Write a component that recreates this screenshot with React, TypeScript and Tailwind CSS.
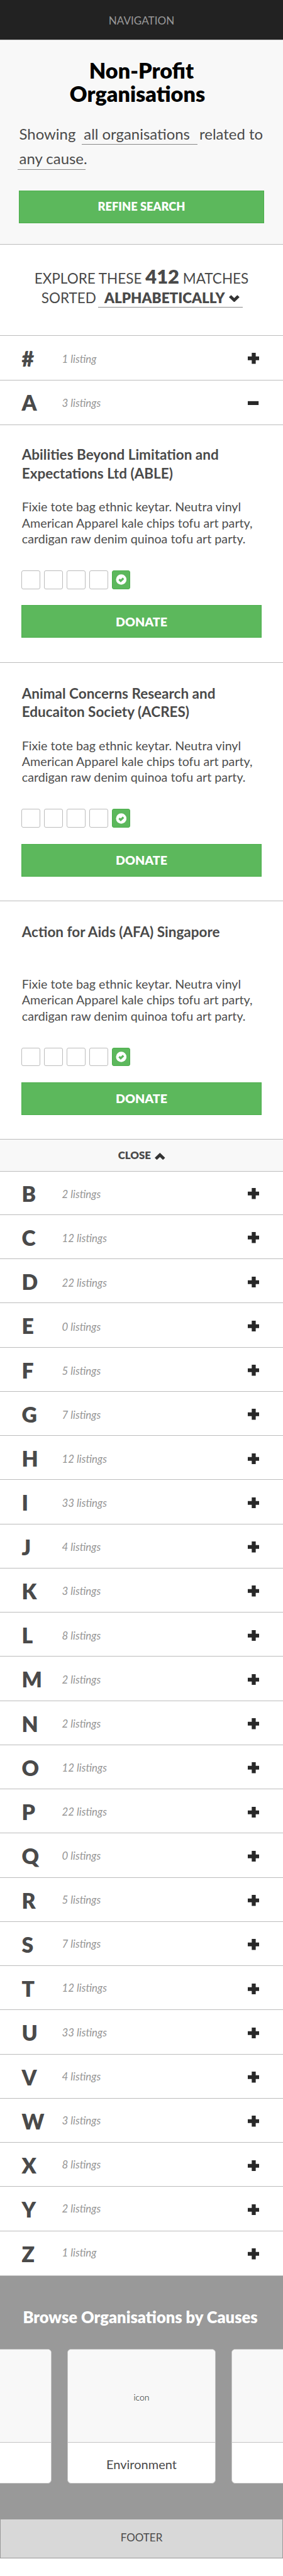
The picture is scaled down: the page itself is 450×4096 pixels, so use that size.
import type { ReactNode } from "react";

type Organisation = { name: ReactNode; pad: string };
type Group = { letter: string; count: number; size: string };

const ORGANISATIONS: Organisation[] = [
  { name: <>Abilities Beyond Limitation and<br />Expectations Ltd (ABLE)</>, pad: "h-[377.98px] pt-[32.8px]" },
  { name: <>Animal Concerns Research and<br />Educaiton Society (ACRES)</>, pad: "h-[379.39px] pt-[34.2px]" },
  { name: <>Action for Aids (AFA) Singapore</>, pad: "h-[379.39px] pt-[34.2px]" },
];

const COUNTS = [2, 12, 22, 0, 5, 7, 12, 33, 4, 3, 8, 2, 2, 12, 22, 0, 5, 7, 12, 33, 4, 3, 8, 2, 1];

const GROUPS: Group[] = COUNTS.map((count, i) => ({
  letter: String.fromCharCode(66 + i),
  count,
  size:
    i === 0
      ? "h-[68.85px] pt-[17.6px]"
      : i === COUNTS.length - 1
        ? "h-[71.66px] pt-[19px]"
        : "h-[70.257px] pt-[19px]",
}));

function Chevron({ className }: { className: string }) {
  return (
    <svg viewBox="0 0 24 16.5" className={className} fill="#333">
      <path d="M0 5 L5 0.2 L12 7 L19 0.2 L24 5 L12 16.5 Z" />
    </svg>
  );
}

function Plus() {
  return (
    <svg viewBox="0 0 26.5 25" className="mt-[8.6px] h-[17.6px] w-[18.6px]" fill="#282828">
      <path d="M9 0h9v8.2h8.5v8.6H18V25H9v-8.2H0V8.2h9z" />
    </svg>
  );
}

function Minus() {
  return (
    <svg viewBox="0 0 26.5 25" className="mt-[8.6px] h-[17.6px] w-[18.6px]" fill="#282828">
      <path d="M0 8.3h24.5v8.8H0z" />
    </svg>
  );
}

function GroupRow({ letter, count, size, shift, open }: Group & { shift: number; open?: boolean }) {
  return (
    <div className={`flex items-start border-b border-[#bcbcbc] pl-[34.5px] pr-[37.6px] ${size}`}>
      <div className="w-[64px] text-[33.75px] font-extrabold leading-[34px] text-[#4a4a4a]">{letter}</div>
      <div
        className="flex-1 text-[16.87px] italic leading-[34px] text-[#959595]"
        style={{ marginTop: shift }}
      >
        {count} {count === 1 ? "listing" : "listings"}
      </div>
      {open ? <Minus /> : <Plus />}
    </div>
  );
}

function OrganisationCard({ name, pad }: Organisation) {
  return (
    <article className={`border-b border-[#bcbcbc] px-[33.75px] ${pad}`}>
      <h3 className="h-[59px] whitespace-nowrap pl-[1px] text-[22.5px] font-bold leading-[29.5px] text-[#4a4a4a]">{name}</h3>
      <p className="mt-[25.8px] whitespace-nowrap pl-[1px] text-[19.7px] leading-[25.3px] text-[#4e4e4e]">
        Fixie tote bag ethnic keytar. Neutra vinyl<br />
        American Apparel kale chips tofu art party,<br />
        cardigan raw denim quinoa tofu art party.
      </p>
      <div className="mt-[38px] flex gap-[6.36px] pl-[0.7px]">
        {[0, 1, 2, 3].map((i) => (
          <div key={i} className="size-[29.5px] rounded-[3px] border border-[#bcbcbc]" />
        ))}
        <div className="flex size-[29.5px] items-center justify-center rounded-[3px] border border-[#4cae4c] bg-[#5cb85c]">
          <svg viewBox="0 0 24 24" className="size-[17px]">
            <circle cx="12.4" cy="12" r="11.7" fill="#fff" />
            <path d="M7.7 11.6 L11.2 15.2 L17.4 9.2" fill="none" stroke="#5cb85c" strokeWidth="4.6" />
          </svg>
        </div>
      </div>
      <button className="mt-[25.8px] flex h-[52px] w-full items-center justify-center border border-[#4cae4c] bg-[#5cb85c] text-[19.7px] font-extrabold text-white">
        DONATE
      </button>
    </article>
  );
}

function CauseCard({ icon, title }: { icon?: string; title?: string }) {
  return (
    <div className="h-[213.3px] w-[236.25px] shrink-0 overflow-hidden rounded-[6px] border border-[#c4c4c4] bg-white">
      <div className="flex h-[148px] items-center justify-center border-b border-[#c4c4c4] bg-[#f8f8f8] pt-[3px] text-[14.06px] font-light text-black">
        {icon}
      </div>
      <div className="flex h-[63.3px] items-center justify-center pt-[3px] text-[20px] text-[#4a4a4a]">{title}</div>
    </div>
  );
}

export default function App() {
  return (
    <div className="h-[4096px] w-[450px] overflow-hidden bg-white font-['Lato',sans-serif] text-[#4a4a4a]">
      <nav className="h-[64.43px] border-b border-[#ccc] bg-[#222] pt-[22.75px] text-center text-[17.1px] leading-[20px] text-[#999]">
        NAVIGATION
      </nav>

      <header className="h-[324.59px] border-b border-[#bcbcbc] bg-[#f8f8f8] px-[30.23px] pt-[28.55px]">
        <h1 className="text-center text-[34.2px] font-extrabold leading-[37.5px] text-black">
          Non-Profit<br />
          <span className="pr-[13px]">Organisations</span>
        </h1>
        <div className="mt-[24.94px] whitespace-nowrap pl-[0.4px] text-[23.9px] leading-[39.4px]">
          <div className="h-[39.4px]">
            <span>Showing</span>
            <span className="ml-[9.2px] inline-block border-b border-[#888] pb-[2px] pl-[3.8px] pr-[11.7px] leading-[29px]">all organisations</span>
            <span className="ml-[3.5px]">related to</span>
          </div>
          <div className="h-[39.4px]">
            <span className="-ml-[2.5px] inline-block w-[108.3px] border-b border-[#888] pb-[2.6px] pl-[2.5px] leading-[29px]">any cause.</span>
          </div>
        </div>
        <button className="mt-[31.1px] flex h-[52px] w-full items-center justify-center border border-[#4cae4c] bg-[#5cb85c] text-[18.28px] font-extrabold text-white">
          REFINE SEARCH
        </button>
      </header>

      <section className="h-[144.73px] whitespace-nowrap border-b border-[#bcbcbc] pt-[39.1px] text-[22.5px] leading-[30.8px]">
        <div className="h-[30.8px] text-center">
          EXPLORE THESE <span className="text-[30.9px] font-extrabold leading-[20px]">412</span> MATCHES
        </div>
        <div className="pl-[65.8px]">
          <span>SORTED</span>
          <span className="ml-[2.6px] inline-block border-b border-[#888] pb-[1px] pl-[10.4px] pr-[4.9px] font-extrabold leading-[27px]">
            ALPHABETICALLY
            <Chevron className="mb-[1.8px] ml-[6.6px] inline-block h-[11.6px] w-[16.9px] align-baseline" />
          </span>
        </div>
      </section>

      <main>
        <GroupRow letter="#" count={1} size="h-[71.66px] pt-[19px]" shift={1} />
        <GroupRow letter="A" count={3} size="h-[70.26px] pt-[17.6px]" shift={1} open />
        {ORGANISATIONS.map((org, i) => (
          <OrganisationCard key={i} {...org} />
        ))}
        <button className="flex h-[50.58px] w-full items-center border-b border-[#bcbcbc] bg-[#f8f8f8] pl-[187.7px] text-[16.87px] font-extrabold">
          CLOSE
          <Chevron className="ml-[6.3px] mt-[3px] h-[11.6px] w-[16.6px] rotate-180" />
        </button>
        {GROUPS.map((group, i) => (
          <GroupRow key={group.letter} {...group} shift={1.8 - i * 0.13} />
        ))}
      </main>

      <section className="h-[385.91px] overflow-hidden bg-[#999] pt-[49.4px]">
        <h2 className="whitespace-nowrap pr-[4px] text-center text-[25.5px] font-extrabold leading-[30px] text-white">
          Browse Organisations by Causes
        </h2>
        <div className="mt-[36.8px] flex justify-center gap-[25.3px]">
          <CauseCard />
          <CauseCard icon="icon" title="Environment" />
          <CauseCard />
        </div>
      </section>

      <footer className="flex h-[63.23px] items-center justify-center border border-[#999] bg-[#d8d8d8] pb-[3px] text-[17px]">
        FOOTER
      </footer>
    </div>
  );
}
